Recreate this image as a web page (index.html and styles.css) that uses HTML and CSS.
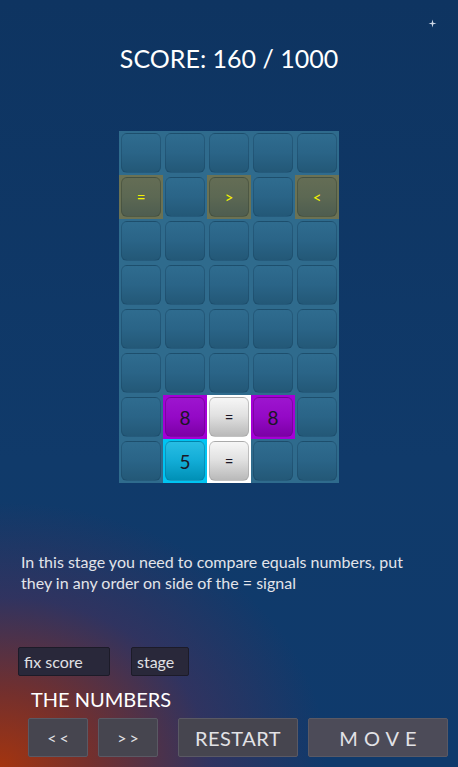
FILE: index.html
```html
<!DOCTYPE html>
<html>
<head>
<meta charset="utf-8">
<link rel="stylesheet" href="styles.css">
</head>
<body>
<div class="app">
  <svg class="star" width="9" height="9" viewBox="0 0 9 9"><path d="M4.5 0.5 L5.3 3.7 L8.5 4.5 L5.3 5.3 L4.5 8.5 L3.7 5.3 L0.5 4.5 L3.7 3.7 Z" fill="#cfd8e6"/></svg>
  <h1 class="score">SCORE: 160 / 1000</h1>
  <div class="board">
    <div class="cell"><div class="tile"></div></div>
    <div class="cell"><div class="tile"></div></div>
    <div class="cell"><div class="tile"></div></div>
    <div class="cell"><div class="tile"></div></div>
    <div class="cell"><div class="tile"></div></div>

    <div class="cell op"><div class="tile">=</div></div>
    <div class="cell"><div class="tile"></div></div>
    <div class="cell op"><div class="tile">&gt;</div></div>
    <div class="cell"><div class="tile"></div></div>
    <div class="cell op"><div class="tile">&lt;</div></div>

    <div class="cell"><div class="tile"></div></div>
    <div class="cell"><div class="tile"></div></div>
    <div class="cell"><div class="tile"></div></div>
    <div class="cell"><div class="tile"></div></div>
    <div class="cell"><div class="tile"></div></div>

    <div class="cell"><div class="tile"></div></div>
    <div class="cell"><div class="tile"></div></div>
    <div class="cell"><div class="tile"></div></div>
    <div class="cell"><div class="tile"></div></div>
    <div class="cell"><div class="tile"></div></div>

    <div class="cell"><div class="tile"></div></div>
    <div class="cell"><div class="tile"></div></div>
    <div class="cell"><div class="tile"></div></div>
    <div class="cell"><div class="tile"></div></div>
    <div class="cell"><div class="tile"></div></div>

    <div class="cell"><div class="tile"></div></div>
    <div class="cell"><div class="tile"></div></div>
    <div class="cell"><div class="tile"></div></div>
    <div class="cell"><div class="tile"></div></div>
    <div class="cell"><div class="tile"></div></div>

    <div class="cell"><div class="tile"></div></div>
    <div class="cell purple"><div class="tile">8</div></div>
    <div class="cell white"><div class="tile">=</div></div>
    <div class="cell purple"><div class="tile">8</div></div>
    <div class="cell"><div class="tile"></div></div>

    <div class="cell"><div class="tile"></div></div>
    <div class="cell cyan"><div class="tile">5</div></div>
    <div class="cell white"><div class="tile">=</div></div>
    <div class="cell"><div class="tile"></div></div>
    <div class="cell"><div class="tile"></div></div>
  </div>
  <p class="desc">In this stage you need to compare equals numbers, put they in any order on side of the = signal</p>
  <div class="inputs">
    <div class="field f1">fix score</div>
    <div class="field f2">stage</div>
  </div>
  <div class="title">THE NUMBERS</div>
  <div class="buttons">
    <button class="btn small">&lt;&lt;</button>
    <button class="btn small">&gt;&gt;</button>
    <button class="btn restart">RESTART</button>
    <button class="btn move">MOVE</button>
  </div>
</div>
</body>
</html>
```
FILE: styles.css
```css
html, body {
  margin: 0;
  padding: 0;
}
body {
  width: 458px;
  height: 767px;
  overflow: hidden;
  font-family: Lato, "Open Sans", sans-serif;
  color: #fff;
  background:
    radial-gradient(ellipse 420px 340px at 0% 100%, rgba(172,52,10,0.95) 0%, rgba(140,45,30,0.8) 22%, rgba(80,45,85,0.5) 50%, rgba(20,55,105,0) 78%),
    linear-gradient(180deg, #0e3461 0%, #103a6a 60%, #0f3a6c 100%);
}
.app {
  position: relative;
  display: flex;
  flex-direction: column;
  align-items: center;
  padding-top: 43px;
  height: 767px;
  box-sizing: border-box;
}
.star {
  position: absolute;
  left: 428px;
  top: 19px;
}
.score {
  margin: 0;
  font-weight: 400;
  font-size: 25px;
  line-height: 30px;
  color: #fff;
}
.board {
  margin-top: 58px;
  display: grid;
  grid-template-columns: repeat(5, 44px);
  grid-auto-rows: 44px;
  background: #2f6b8d;
}
.cell {
  padding: 2px;
  box-sizing: border-box;
}
.tile {
  height: 100%;
  box-sizing: border-box;
  border-radius: 6px;
  border: 1px solid rgba(20, 60, 90, 0.35);
  background: linear-gradient(180deg, #2f6c8f 0%, #2a6487 50%, #235877 100%);
  display: flex;
  align-items: center;
  justify-content: center;
  font-size: 19px;
  color: #1a1626;
}
.cell.op {
  background: #6b7254;
}
.cell.op .tile {
  background: linear-gradient(180deg, #646d55 0%, #5c6853 50%, #4e5d50 100%);
  border-color: rgba(60, 70, 50, 0.5);
  color: #f4f200;
  font-size: 15px;
}
.cell.purple {
  background: #a400d6;
}
.cell.purple .tile {
  background: linear-gradient(180deg, #9d15cf 0%, #9409c6 50%, #7c00a6 100%);
  border-color: rgba(110, 0, 140, 0.6);
}
.cell.cyan {
  background: #00c4f2;
}
.cell.cyan .tile {
  background: linear-gradient(180deg, #28bde4 0%, #12acd6 50%, #0090b6 100%);
  border-color: rgba(0, 120, 160, 0.5);
}
.cell.white {
  background: #ffffff;
}
.cell.white .tile {
  background: linear-gradient(180deg, #f6f6f6 0%, #e2e2e2 45%, #b9b9b9 100%);
  border-color: rgba(160, 160, 160, 0.6);
  font-size: 15px;
}
.desc {
  align-self: stretch;
  margin: 68px 0 0 0;
  padding: 0 40px 0 21px;
  font-size: 16px;
  line-height: 21px;
  color: #e2e4ea;
}
.inputs {
  align-self: stretch;
  margin-top: 54px;
  padding-left: 18px;
  display: flex;
  gap: 21px;
}
.field {
  height: 29px;
  box-sizing: border-box;
  background: #29283a;
  border: 1px solid #1c1b28;
  border-radius: 2px;
  padding-left: 5px;
  font-size: 16px;
  line-height: 28px;
  color: #e0e0e4;
}
.f1 { width: 92px; }
.f2 { width: 58px; }
.title {
  align-self: stretch;
  margin-top: 11px;
  padding-left: 31px;
  font-size: 20px;
  line-height: 24px;
  color: #fff;
}
.buttons {
  align-self: stretch;
  margin-top: 7px;
  padding-left: 28px;
  display: flex;
  gap: 10px;
}
.btn {
  height: 39px;
  box-sizing: border-box;
  background: #46454f;
  border: 1px solid #5a5964;
  border-radius: 2px;
  color: #e2e2e6;
  font-family: Lato, "Open Sans", sans-serif;
  padding: 0;
  margin: 0;
}
.small {
  width: 60px;
  font-size: 16px;
  letter-spacing: 3px;
  text-indent: 3px;
}
.restart {
  width: 120px;
  margin-left: 10px;
  font-size: 20px;
  letter-spacing: 0.5px;
}
.move {
  width: 140px;
  font-size: 20px;
  letter-spacing: 6px;
  text-indent: 6px;
  background: #4c4b58;
}
```
